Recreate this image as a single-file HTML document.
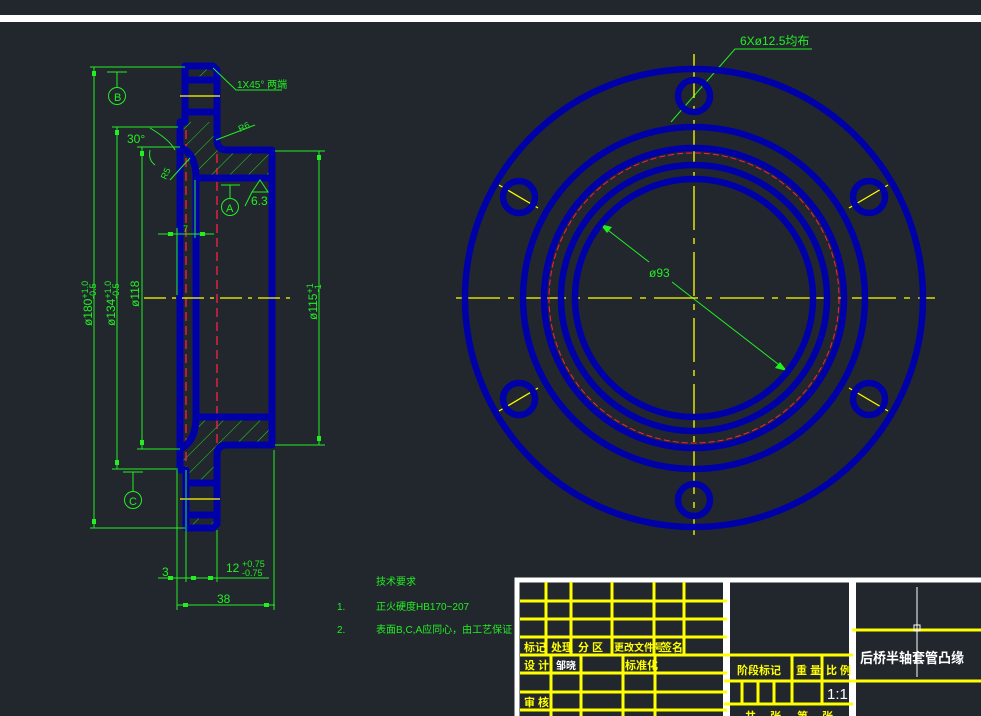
<!DOCTYPE html>
<html><head><meta charset="utf-8"><style>
html,body{margin:0;padding:0;background:#22272e;}
svg{display:block}
text{font-family:"Liberation Sans","Noto Sans CJK SC",sans-serif;}
</style></head><body>
<svg width="981" height="716" viewBox="0 0 981 716" xmlns="http://www.w3.org/2000/svg">
<defs>
<pattern id="h" width="13" height="13" patternUnits="userSpaceOnUse" patternTransform="rotate(45)">
<line x1="0" y1="0" x2="0" y2="13" stroke="#22dd22" stroke-width="1"/>
</pattern>
</defs>
<rect width="981" height="716" fill="#22272e"/>
<rect x="0" y="15" width="981" height="7" fill="#fff"/>

<polygon points="183,122 216,122 216,148 272,148 272,178 196,178 183,150" fill="url(#h)"/>
<polygon points="196,417 272,417 272,445 217,445 217,480 183,480 183,445 196,430" fill="url(#h)"/>
<rect x="186" y="67" width="30" height="13" fill="url(#h)"/>
<rect x="186" y="515" width="30" height="12" fill="url(#h)"/>

<g stroke="#ff2040" stroke-width="1.3" stroke-dasharray="9,5">
<line x1="186" y1="130" x2="186" y2="470"/>
<line x1="217" y1="140" x2="217" y2="470"/>
</g>

<g fill="none" stroke="#0000a8" stroke-width="7" stroke-linejoin="round">
<path d="M185,66 L213,66 L217,70 L217,140 Q217,150 227,150 L272,150 L272,445 L227,445 Q217,445 217,455 L217,524 L213,528 L186,528 L186,470 L180,470 L180,122 L185,122 Z"/>
<path d="M196,178 L272,178 M182,148 Q196,155 196,178 L196,417 L272,417 M182,448 Q196,440 196,417"/>
<path d="M185,80 H217 M185,112 H217 M186,483 H217 M186,515 H217"/>
</g>

<g stroke="#ffff00" stroke-width="1.3">
<line x1="144" y1="298" x2="294" y2="298" stroke-dasharray="22,6,4,6"/>
<line x1="180" y1="96" x2="220" y2="96"/>
<line x1="180" y1="499" x2="220" y2="499"/>
</g>

<g stroke="#22ee22" stroke-width="1" fill="none">
<line x1="90" y1="67" x2="185" y2="67"/><line x1="90" y1="528" x2="185" y2="528"/>
<line x1="94" y1="67" x2="94" y2="528"/>
<line x1="112" y1="127" x2="178" y2="127"/><line x1="112" y1="469" x2="178" y2="469"/>
<line x1="117" y1="127" x2="117" y2="469"/>
<line x1="137" y1="147" x2="180" y2="147"/><line x1="137" y1="449" x2="180" y2="449"/>
<line x1="142" y1="147" x2="142" y2="449"/>
<line x1="275" y1="151" x2="325" y2="151"/><line x1="275" y1="445" x2="325" y2="445"/>
<line x1="319" y1="151" x2="319" y2="445"/>
<line x1="177" y1="470" x2="177" y2="610"/><line x1="186" y1="470" x2="186" y2="582"/>
<line x1="217" y1="530" x2="217" y2="582"/><line x1="274" y1="450" x2="274" y2="610"/>
<line x1="158" y1="578" x2="269" y2="578"/>
<line x1="177" y1="605" x2="275" y2="605"/>
<line x1="158" y1="234" x2="214" y2="234"/>
<line x1="177" y1="228" x2="177" y2="295"/><line x1="195" y1="180" x2="195" y2="238"/>
<line x1="107" y1="72" x2="127" y2="72"/><line x1="117" y1="72" x2="117" y2="88"/><circle cx="117" cy="96" r="8.5"/>
<line x1="123" y1="472" x2="143" y2="472"/><line x1="133" y1="472" x2="133" y2="492"/><circle cx="133" cy="500" r="8.5"/>
<line x1="221" y1="185" x2="240" y2="185"/><line x1="230" y1="185" x2="230" y2="199"/><circle cx="230" cy="207" r="8.5"/>
<path d="M252,192 L260,180 L268,192 Z M252,192 L245,206"/>
<path d="M213,68 L236,90 L282,90"/>
<path d="M216,140 L255,125"/>
<path d="M190,158 L170,180"/>
<path d="M150,128 Q170,140 175,150 M150,150 Q148,160 155,165"/>
<path d="M671,122 L735,49 L812,49"/>
<path d="M600,224 L649,262 M672,282 L787,371"/>
</g>
<g fill="#22ee22">
<rect x="92" y="71" width="4" height="5"/><rect x="92" y="519" width="4" height="5"/>
<rect x="115" y="130" width="4" height="5"/><rect x="115" y="460" width="4" height="5"/>
<rect x="140" y="151" width="4" height="5"/><rect x="140" y="440" width="4" height="5"/>
<rect x="317" y="155" width="4" height="5"/><rect x="317" y="436" width="4" height="5"/>
<rect x="168" y="576" width="5" height="4"/><rect x="191" y="576" width="5" height="4"/><rect x="208" y="576" width="5" height="4"/>
<rect x="183" y="603" width="5" height="4"/><rect x="264" y="603" width="5" height="4"/>
<rect x="168" y="232" width="5" height="4"/><rect x="200" y="232" width="5" height="4"/>
<polygon points="600,224 612,227 607,233"/><polygon points="787,371 775,368 780,362"/>
</g>
<g fill="#22ee22" font-size="12">
<text x="114" y="101" font-size="11">B</text>
<text x="129" y="505" font-size="11">C</text>
<text x="226" y="212" font-size="11">A</text>
<text x="251" y="205">6.3</text>
<text x="127" y="143">30°</text>
<text x="237" y="88" font-size="10">1X45° 两端</text>
<text x="240" y="132" font-size="9" transform="rotate(-25 240 132)">R6</text>
<text x="166" y="180" font-size="9" transform="rotate(-65 166 180)">R5</text>
<text x="183" y="232" font-size="9">7</text>
<text x="162" y="576">3</text>
<text x="226" y="572">12</text>
<text x="242" y="567" font-size="9">+0.75</text>
<text x="242" y="576" font-size="9">-0.75</text>
<text x="217" y="603">38</text>
<text x="92" y="326" transform="rotate(-90 92 326)">ø180<tspan font-size="9" dy="-4">+1.0</tspan><tspan font-size="9" dx="-18" dy="8">-0.5</tspan></text>
<text x="115" y="326" transform="rotate(-90 115 326)">ø134<tspan font-size="9" dy="-4">+1.0</tspan><tspan font-size="9" dx="-18" dy="8">-0.5</tspan></text>
<text x="139" y="307" transform="rotate(-90 139 307)">ø118</text>
<text x="317" y="320" transform="rotate(-90 317 320)">ø115<tspan font-size="9" dy="-4">+1</tspan><tspan font-size="9" dx="-9" dy="8">-1</tspan></text>
<text x="740" y="45">6Xø12.5均布</text>
<text x="649" y="277">ø93</text>
<text x="376" y="585" font-size="10">技术要求</text>
<text x="337" y="610" font-size="10">1.</text>
<text x="376" y="610" font-size="10">正火硬度HB170~207</text>
<text x="337" y="633" font-size="10">2.</text>
<text x="376" y="633" font-size="10">表面B,C,A应同心，由工艺保证</text>
</g>

<g stroke="#ffff00" stroke-width="1.3">
<line x1="456" y1="298" x2="935" y2="298" stroke-dasharray="44,8,6,8"/>
<line x1="694" y1="54" x2="694" y2="535" stroke-dasharray="44,8,6,8"/>
<line x1="499" y1="185" x2="538" y2="208"/><line x1="849" y1="208" x2="888" y2="185"/>
<line x1="499" y1="411" x2="538" y2="388"/><line x1="849" y1="388" x2="888" y2="411"/>
</g>
<g fill="none" stroke="#0000a8" stroke-width="6.5">
<circle cx="694" cy="298" r="229"/>
<circle cx="694" cy="298" r="171"/>
<circle cx="694" cy="298" r="150"/>
<circle cx="694" cy="298" r="133"/>
<circle cx="694" cy="298" r="119"/>
<circle cx="694" cy="96" r="16"/><circle cx="694" cy="500" r="16"/>
<circle cx="519" cy="197" r="16"/><circle cx="869" cy="197" r="16"/>
<circle cx="519" cy="399" r="16"/><circle cx="869" cy="399" r="16"/>
</g>
<circle cx="694" cy="298" r="145" fill="none" stroke="#ff2040" stroke-width="1" stroke-dasharray="6,3"/>

<rect x="517" y="580" width="470" height="140" fill="none" stroke="#fff" stroke-width="5"/>
<rect x="723" y="582" width="7" height="140" fill="#fff"/>
<rect x="849" y="582" width="7" height="140" fill="#fff"/>
<g stroke="#ffff00" stroke-width="3">
<line x1="520" y1="601" x2="727" y2="601"/><line x1="520" y1="619" x2="727" y2="619"/>
<line x1="520" y1="637" x2="727" y2="637"/><line x1="520" y1="655" x2="853" y2="655"/>
<line x1="520" y1="673" x2="727" y2="673"/><line x1="520" y1="692" x2="727" y2="692"/>
<line x1="520" y1="710" x2="727" y2="710"/>
<line x1="546" y1="582" x2="546" y2="655"/><line x1="571" y1="582" x2="571" y2="655"/>
<line x1="612" y1="582" x2="612" y2="655"/><line x1="654" y1="582" x2="654" y2="655"/>
<line x1="684" y1="582" x2="684" y2="655"/>
<line x1="551" y1="655" x2="551" y2="716"/><line x1="581" y1="655" x2="581" y2="716"/>
<line x1="623" y1="655" x2="623" y2="716"/><line x1="655" y1="655" x2="655" y2="716"/>
<line x1="724" y1="681" x2="853" y2="681"/><line x1="724" y1="704" x2="853" y2="704"/>
<line x1="792" y1="655" x2="792" y2="704"/><line x1="822" y1="655" x2="822" y2="704"/>
<line x1="742" y1="681" x2="742" y2="704"/><line x1="758" y1="681" x2="758" y2="704"/><line x1="774" y1="681" x2="774" y2="704"/>
<line x1="852" y1="630" x2="981" y2="630"/><line x1="852" y1="681" x2="981" y2="681"/>
</g>
<line x1="917" y1="587" x2="917" y2="677" stroke="#fff" stroke-width="1"/>
<rect x="914" y="625" width="6" height="6" fill="none" stroke="#fff" stroke-width="1"/>
<g fill="#ffff00" font-size="11" font-weight="bold">
<text x="524" y="651">标记</text><text x="551" y="651">处理</text><text x="578" y="651">分 区</text>
<text x="614" y="651" font-size="10">更改文件号</text><text x="661" y="651">签名</text>
<text x="524" y="669">设 计</text><text x="625" y="669">标准化</text>
<text x="524" y="706">审 核</text>
<text x="737" y="674">阶段标记</text><text x="796" y="674">重 量</text><text x="826" y="674">比 例</text>
<text x="745" y="720">共</text><text x="770" y="720">张</text><text x="797" y="720">第</text><text x="822" y="720">张</text>
</g>
<text x="556" y="669" fill="#fff" font-size="10" font-weight="bold">邹晓</text>
<text x="827" y="699" fill="#fff" font-size="15" font-family="Liberation Serif">1:1</text>
<text x="860" y="663" fill="#fff" font-size="14" font-weight="bold" textLength="104" lengthAdjust="spacingAndGlyphs">后桥半轴套管凸缘</text>
</svg>
</body></html>
